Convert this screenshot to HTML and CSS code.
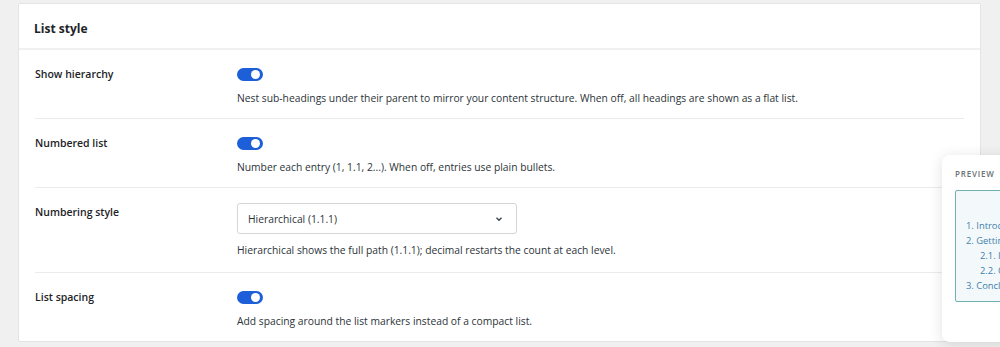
FILE: index.html
```html
<!DOCTYPE html>
<html lang="en">
<head>
<meta charset="UTF-8">
<meta name="viewport" content="width=device-width, initial-scale=1.0">
<title>List style</title>
<link rel="stylesheet" href="styles.css">
</head>
<body>

<div class="card">
    <div class="card-head">List style</div>

    <div class="row">
        <div class="label">Show hierarchy</div>
        <div class="control">
            <span class="toggle on"></span>
            <p class="desc">Nest sub-headings under their parent to mirror your content structure. When off, all headings are shown as a flat list.</p>
        </div>
    </div>

    <div class="row">
        <div class="label">Numbered list</div>
        <div class="control">
            <span class="toggle on"></span>
            <p class="desc">Number each entry (1, 1.1, 2...). When off, entries use plain bullets.</p>
        </div>
    </div>

    <div class="row row-select">
        <div class="label">Numbering style</div>
        <div class="control">
            <div class="select">
                <span>Hierarchical (1.1.1)</span>
                <svg width="10" height="10" viewBox="0 0 10 10"><path d="M2.5 3.8 5 6.2 7.5 3.8" fill="none" stroke="#3c434a" stroke-width="1.4"/></svg>
            </div>
            <p class="desc">Hierarchical shows the full path (1.1.1); decimal restarts the count at each level.</p>
        </div>
    </div>

    <div class="row last">
        <div class="label">List spacing</div>
        <div class="control">
            <span class="toggle on"></span>
            <p class="desc">Add spacing around the list markers instead of a compact list.</p>
        </div>
    </div>
</div>

<div class="preview">
    <div class="preview-title">Preview</div>
    <div class="preview-box">
        <ol class="toc">
            <li>1. Introduction</li>
            <li>2. Getting started</li>
            <li class="sub">2.1. Installation</li>
            <li class="sub">2.2. Configuration</li>
            <li>3. Conclusion</li>
        </ol>
    </div>
</div>

</body>
</html>
```

FILE: styles.css
```css
body {
    margin: 0;
    background-color: #f0f0f1;
    font-family: "Open Sans", "Noto Sans", sans-serif;
    color: #1e1e1e;
}
.card {
    margin: 3px 19px 0 18px;
    background-color: #fff;
    border: 1px solid #e4e4e7;
    border-radius: 2px;
}
.card-head {
    padding: 16px 15px 11px;
    font-size: 12px;
    font-weight: 700;
    line-height: 17px;
    color: #1d2327;
    border-bottom: 2px solid #f0f0f1;
}
.row {
    display: grid;
    grid-template-columns: 202px 1fr;
    margin: 0 16px;
    padding: 17px 0 12px;
    border-bottom: 1px solid #ebebec;
}
.row.row-select {
    padding: 15px 0 14px;
}
.row.row-select .label {
    padding-top: 2px;
}
.row.row-select .desc {
    margin-top: 8px;
}
.row.last {
    border-bottom: none;
    padding-bottom: 12px;
}
.label {
    font-size: 10.5px;
    font-weight: 600;
    line-height: 14px;
    color: #1d2327;
}
.control {
    display: flex;
    flex-direction: column;
    align-items: flex-start;
}
.toggle {
    position: relative;
    width: 26px;
    height: 13px;
    border-radius: 7px;
    background-color: #1d5fd9;
    margin-top: 1px;
}
.toggle.on::after {
    content: "";
    position: absolute;
    top: 2px;
    right: 3px;
    width: 9px;
    height: 9px;
    border-radius: 50%;
    background-color: #fff;
}
.desc {
    margin: 9px 0 0;
    font-size: 10.3px;
    line-height: 16px;
    color: #2c3338;
}
.select {
    display: flex;
    align-items: center;
    justify-content: space-between;
    box-sizing: border-box;
    width: 280px;
    height: 31px;
    padding: 0 12px 0 10px;
    border: 1px solid #d5d5d8;
    border-radius: 3px;
    font-size: 10.3px;
    color: #2c3338;
}
.preview {
    position: absolute;
    top: 155px;
    left: 942px;
    width: 120px;
    height: 187px;
    box-sizing: border-box;
    padding: 13px 0 0 13px;
    background-color: #fff;
    border-radius: 8px;
    box-shadow: 0 2px 14px rgba(0, 0, 0, 0.12);
}
.preview-title {
    font-size: 8px;
    font-weight: 600;
    letter-spacing: 0.8px;
    text-transform: uppercase;
    color: #6b7075;
    line-height: 12px;
}
.preview-box {
    margin-top: 10px;
    height: 112px;
    box-sizing: border-box;
    border: 1px solid #6fb0b3;
    border-radius: 2px;
    background-color: #f3f9fa;
    padding: 27px 0 0 10px;
}
.toc {
    list-style: none;
    margin: 0;
    padding: 0;
    font-size: 9.4px;
    line-height: 15px;
    color: #3f7fad;
    white-space: nowrap;
}
.toc .sub {
    padding-left: 14px;
}
```
